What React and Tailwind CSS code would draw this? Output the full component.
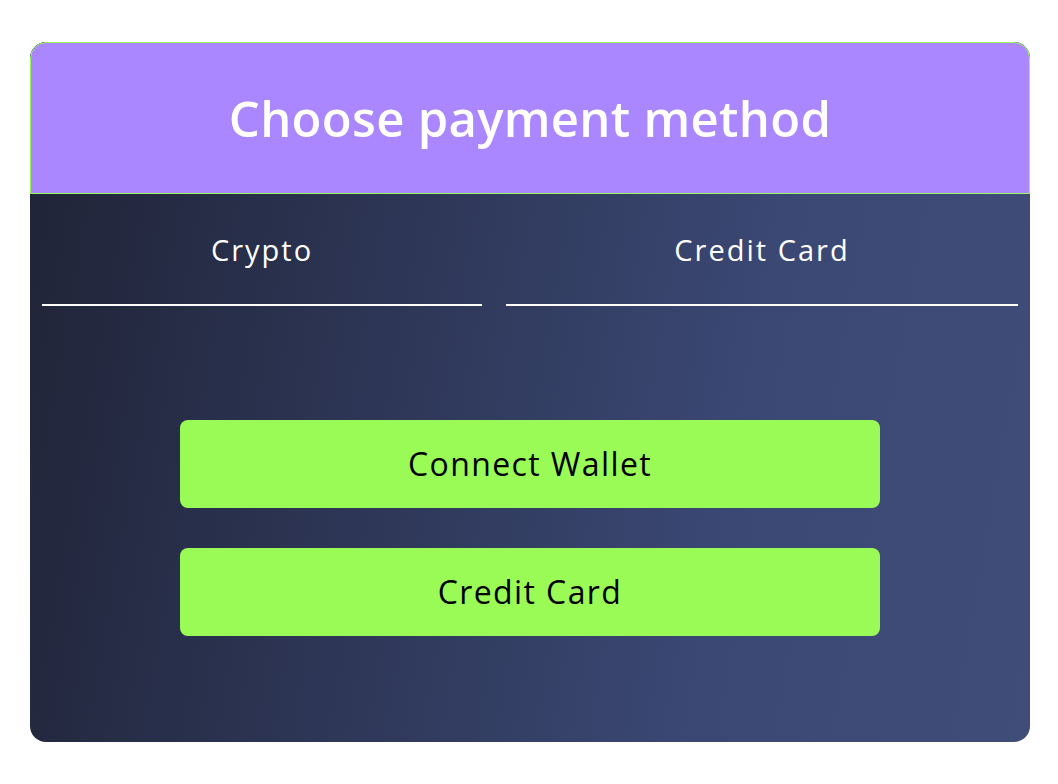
export default function App() {
  return (
    <div className="w-[1058px] h-[784px] bg-white pt-[42px] pl-[30px]" style={{ fontFamily: '"Open Sans", "Noto Sans", sans-serif' }}>
      <div className="w-[1000px] h-[700px] rounded-[16px] overflow-hidden flex flex-col bg-[linear-gradient(100deg,#1f2336_0%,#3b4874_70%,#3f4d78_100%)]">
        <div className="h-[152px] shrink-0 bg-[#aa87ff] border border-[#99fb55] rounded-t-[16px] flex items-center justify-center">
          <h1 className="text-white text-[49px] tracking-[0.3px] font-semibold leading-none">Choose payment method</h1>
        </div>
        <div className="flex gap-[24px] px-[12px] pt-[32px]">
          <div className="w-[440px] flex flex-col items-center">
            <span className="text-white text-[29px] tracking-[2px] leading-[48px]">Crypto</span>
            <div className="mt-[30px] h-[2px] w-full bg-white" />
          </div>
          <div className="w-[512px] flex flex-col items-center">
            <span className="text-white text-[29px] tracking-[2px] leading-[48px]">Credit Card</span>
            <div className="mt-[30px] h-[2px] w-full bg-white" />
          </div>
        </div>
        <div className="flex flex-col items-center gap-[40px] pt-[114px]">
          <button className="w-[700px] h-[88px] rounded-[8px] bg-[#9afb56] text-black text-[32px] tracking-[1.4px]">Connect Wallet</button>
          <button className="w-[700px] h-[88px] rounded-[8px] bg-[#9afb56] text-black text-[32px] tracking-[1.4px]">Credit Card</button>
        </div>
      </div>
    </div>
  );
}
